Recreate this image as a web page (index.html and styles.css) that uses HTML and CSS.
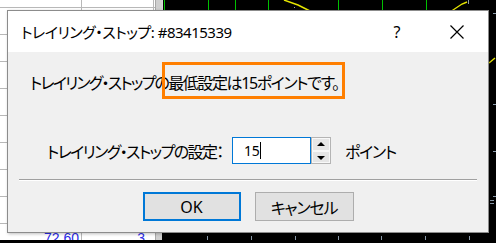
FILE: index.html
```html
<!DOCTYPE html>
<html lang="ja">
<head>
    <meta charset="UTF-8">
    <meta name="viewport" content="width=device-width, initial-scale=1.0">
    <title>トレイリング・ストップ</title>
    <link rel="stylesheet" href="styles.css">
</head>
<body>
    <div class="terminal">
        <div class="trades">
            <div class="grid">
                <div class="row first"><span></span><span></span></div>
                <div class="row"><span></span><span></span></div>
                <div class="row"><span></span><span></span></div>
                <div class="row"><span></span><span></span></div>
                <div class="row"><span></span><span></span></div>
                <div class="row"><span></span><span></span></div>
                <div class="row"><span></span><span></span></div>
                <div class="row"><span></span><span></span></div>
                <div class="row"><span></span><span></span></div>
                <div class="row"><span class="num">72.60</span><span class="num">3</span></div>
            </div>
            <div class="scroll"></div>
        </div>
        <svg class="chart" width="334" height="243" viewBox="0 0 334 243">
            <line x1="0.5" y1="0" x2="0.5" y2="12" stroke="#d8d8d8"/>
            <g stroke="#00c000">
                <line x1="2.5" y1="0" x2="2.5" y2="12"/>
                <line x1="46.5" y1="0" x2="46.5" y2="12"/>
                <line x1="73.5" y1="0" x2="73.5" y2="12"/>
                <line x1="106.5" y1="0" x2="106.5" y2="12"/>
                <line x1="176.5" y1="0" x2="176.5" y2="12"/>
                <line x1="220.5" y1="0" x2="220.5" y2="12"/>
                <line x1="264.5" y1="0" x2="264.5" y2="12"/>
            </g>
            <g stroke="#e6e600" stroke-width="1.4" fill="none">
                <polyline points="122,0 136,5 150,12"/>
                <polyline points="288,12 300,4 305,2"/>
                <polyline points="327,63 333,58"/>
            </g>
            <g stroke="#8a9aaa">
                <line x1="132" y1="7.5" x2="133" y2="7.5"/>
                <line x1="306.5" y1="0" x2="306.5" y2="4"/>
                <line x1="331" y1="13.5" x2="334" y2="13.5"/>
                <line x1="331" y1="104.5" x2="334" y2="104.5"/>
                <line x1="331" y1="151.5" x2="334" y2="151.5"/>
                <line x1="331" y1="196.5" x2="334" y2="196.5"/>
                <line x1="328" y1="200.5" x2="332" y2="200.5"/>
                <line x1="328" y1="203.5" x2="332" y2="203.5"/>
                <line x1="45.5" y1="236" x2="45.5" y2="240"/>
                <line x1="89.5" y1="236" x2="89.5" y2="240"/>
                <line x1="133.5" y1="236" x2="133.5" y2="240"/>
                <line x1="176.5" y1="236" x2="176.5" y2="240"/>
                <line x1="219.5" y1="236" x2="219.5" y2="240"/>
                <line x1="263.5" y1="236" x2="263.5" y2="240"/>
                <line x1="307.5" y1="236" x2="307.5" y2="240"/>
            </g>
        </svg>
    </div>

    <div class="dialog">
        <div class="titlebar">
            <span class="title">トレイリング・ストップ: #83415339</span>
            <span class="tb-btn help">?</span>
            <span class="tb-btn close">
                <svg width="14" height="14" viewBox="0 0 14 14">
                    <path d="M0.5 0.5 L13.5 13.5 M13.5 0.5 L0.5 13.5" stroke="#000" stroke-width="1.2" fill="none"/>
                </svg>
            </span>
        </div>
        <div class="dlg-body">
            <p class="message">トレイリング・ストップの<span class="mark">最低設定は15ポイントです。</span></p>
            <div class="setting">
                <span class="setting-label">トレイリング・ストップの設定：</span>
                <div class="spin-field">
                    <div class="spin-input">15<span class="caret"></span></div>
                    <div class="spin-buttons">
                        <span class="spin up"></span>
                        <span class="spin down"></span>
                    </div>
                </div>
                <span class="unit">ポイント</span>
            </div>
            <div class="separator"></div>
            <div class="buttons">
                <button class="btn default">OK</button>
                <button class="btn cancel">キャンセル</button>
            </div>
        </div>
    </div>
</body>
</html>
```

FILE: styles.css
```css
body {
    margin: 0;
    width: 496px;
    height: 243px;
    background-color: #000000;
    overflow: hidden;
    position: relative;
    font-family: "Noto Sans", "Noto Sans CJK JP", sans-serif;
}
.terminal {
    display: flex;
    align-items: flex-start;
    height: 243px;
}
.trades {
    display: flex;
    width: 162px;
    height: 240px;
    background-color: #ffffff;
    overflow: hidden;
}
.grid {
    width: 155px;
}
.row {
    display: grid;
    grid-template-columns: 82px 72px;
    height: 26px;
    border-bottom: 1px solid #b8b8b8;
}
.row.first {
    height: 7px;
}
.row span {
    border-right: 1px solid #b8b8b8;
}
.row .num {
    font-family: "Liberation Sans", Arial, sans-serif;
    font-size: 14px;
    line-height: 28px;
    color: #2a2ae8;
    text-align: right;
    padding-right: 2px;
}
.row .num + .num {
    padding-right: 9px;
    border-right: none;
}
.scroll {
    width: 6px;
    background-color: #cfcfcf;
    border-left: 1px solid #a8a8a8;
}
.chart {
    display: block;
    background-color: #000000;
}

/* dialog */
.dialog {
    position: absolute;
    left: 7px;
    top: 10px;
    width: 482px;
    height: 223px;
    box-sizing: border-box;
    border: 1px solid #8c8c8c;
    background-color: #f0f0f0;
    box-shadow: 1px 1px 3px rgba(0, 0, 0, 0.25);
    font-feature-settings: "palt";
    color: #000000;
}
.titlebar {
    display: flex;
    align-items: center;
    height: 41px;
    background-color: #ffffff;
}
.title {
    flex: 1;
    padding-left: 13px;
    font-size: 15px;
    letter-spacing: -0.5px;
    white-space: nowrap;
}
.tb-btn {
    display: flex;
    justify-content: center;
    align-items: center;
    height: 41px;
}
.help {
    width: 58px;
    font-size: 16px;
}
.close {
    width: 62px;
}
.dlg-body {
    display: flex;
    flex-direction: column;
}
.message {
    margin: 21px 0 0 22px;
    font-size: 16px;
    line-height: 20px;
    letter-spacing: -1.8px;
    white-space: nowrap;
}
.mark {
    position: relative;
    display: inline-block;
    letter-spacing: -1.4px;
}
.mark::after {
    content: "";
    position: absolute;
    top: -11px;
    bottom: -6px;
    left: -6px;
    right: -6px;
    border: 3px solid #ff7f00;
}
.setting {
    display: flex;
    align-items: center;
    height: 27px;
    margin-top: 44px;
    padding-left: 39px;
    font-size: 16px;
}
.setting-label {
    width: 185px;
    letter-spacing: -1.6px;
    white-space: nowrap;
}
.spin-field {
    display: flex;
    height: 27px;
}
.spin-input {
    display: flex;
    align-items: center;
    width: 79px;
    box-sizing: border-box;
    border: 1px solid #0078d7;
    background-color: #ffffff;
    padding-left: 11px;
    font-size: 14px;
    letter-spacing: -0.3px;
}
.caret {
    width: 1px;
    height: 17px;
    margin-left: 1px;
    background-color: #000000;
}
.spin-buttons {
    display: flex;
    flex-direction: column;
    width: 20px;
    box-sizing: border-box;
    border: 1px solid #b4b4b4;
    background-color: #f0f0f0;
}
.spin {
    flex: 1;
    position: relative;
    background-color: #e6e6e6;
    border: 1px solid #f8f8f8;
}
.spin.up::after,
.spin.down::after {
    content: "";
    position: absolute;
    left: 4px;
    border-left: 4px solid transparent;
    border-right: 4px solid transparent;
}
.spin.up::after {
    top: 3px;
    border-bottom: 4px solid #000000;
}
.spin.down::after {
    top: 4px;
    border-top: 4px solid #000000;
}
.unit {
    margin-left: 14px;
    letter-spacing: -1.3px;
}
.separator {
    margin: 15px 11px 0 11px;
    border-top: 1px solid #a0a0a0;
    border-bottom: 1px solid #ffffff;
}
.buttons {
    display: flex;
    justify-content: center;
    gap: 14px;
    margin-top: 11px;
}
.btn {
    height: 29px;
    padding: 0;
    background-color: #e1e1e1;
    border: 1px solid #adadad;
    font-family: "Noto Sans", "Noto Sans CJK JP", sans-serif;
    font-feature-settings: "palt";
    font-size: 16px;
    color: #000000;
}
.btn.default {
    width: 98px;
    border: 2px solid #0078d7;
}
.btn.cancel {
    width: 99px;
    letter-spacing: -1.2px;
}
```
